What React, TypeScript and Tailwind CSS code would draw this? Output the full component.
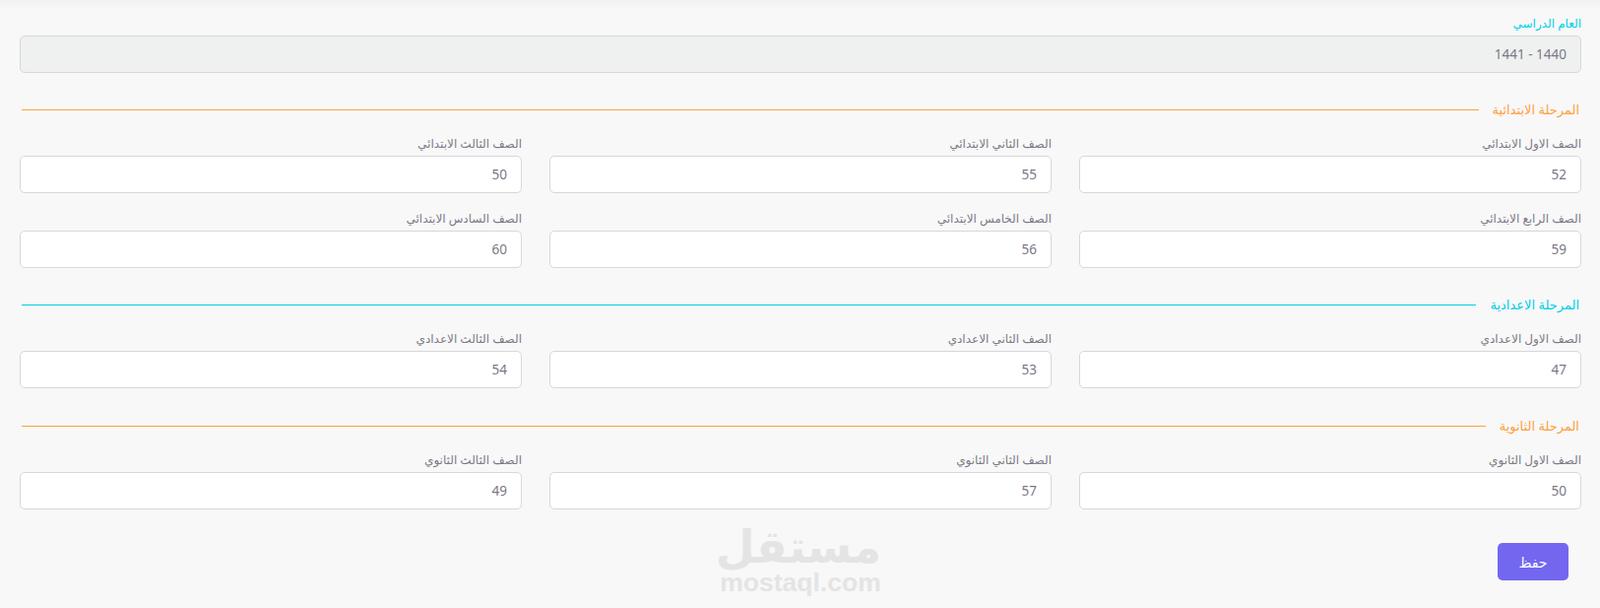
const FONT = "font-['Noto_Sans','DejaVu_Sans',sans-serif]";

type Grade = { label: string; value: number };

const PRIMARY: Grade[] = [
  { label: "الصف الاول الابتدائي", value: 52 },
  { label: "الصف الثاني الابتدائي", value: 55 },
  { label: "الصف الثالث الابتدائي", value: 50 },
  { label: "الصف الرابع الابتدائي", value: 59 },
  { label: "الصف الخامس الابتدائي", value: 56 },
  { label: "الصف السادس الابتدائي", value: 60 },
];

const MIDDLE: Grade[] = [
  { label: "الصف الاول الاعدادي", value: 47 },
  { label: "الصف الثاني الاعدادي", value: 53 },
  { label: "الصف الثالث الاعدادي", value: 54 },
];

const SECONDARY: Grade[] = [
  { label: "الصف الاول الثانوي", value: 50 },
  { label: "الصف الثاني الثانوي", value: 57 },
  { label: "الصف الثالث الثانوي", value: 49 },
];

function Field({ label, value }: Grade) {
  return (
    <label className="block">
      <span className="block h-[22px] text-[12px] leading-[20px] text-[#7b7887]">{label}</span>
      <input
        readOnly
        value={value}
        className="block h-[38px] w-full rounded-[5px] border border-[#d8d6de] bg-white px-[14px] text-[13.5px] text-[#7b7887] outline-none"
      />
    </label>
  );
}

function Section({
  title,
  grades,
  textClass,
  lineClass,
  className,
}: {
  title: string;
  grades: Grade[];
  textClass: string;
  lineClass: string;
  className: string;
}) {
  return (
    <section className={className}>
      <div className="flex items-center gap-[14px] pl-[2px] pr-[2px]">
        <h2 className={`text-[13px] leading-[20px] font-normal ${textClass}`}>{title}</h2>
        <div className={`h-px flex-1 ${lineClass}`} />
      </div>
      <div className="mt-[15px] grid grid-cols-3 gap-x-[28px] gap-y-[16px]">
        {grades.map((g) => (
          <Field key={g.label} {...g} />
        ))}
      </div>
    </section>
  );
}

export default function App() {
  return (
    <div dir="rtl" className={`relative h-[617px] overflow-hidden bg-[#f8f8f8] ${FONT}`}>
      <div className="h-[9px] bg-gradient-to-b from-[#f1f1f1] to-[#f8f8f8]" />

      <div className="pl-[20px] pr-[19px] pt-[5px]">
        <label className="block">
          <span className="block h-[22px] text-[12px] leading-[20px] text-[#00cfe8]">العام الدراسي</span>
          <input
            readOnly
            value="1440 - 1441"
            className="block h-[38px] w-full rounded-[5px] border border-[#d8d6de] bg-[#eff0f0] bg-[radial-gradient(#d4d6d6_0.7px,transparent_0.9px)] bg-[length:10px_6px] px-[14px] text-[13.5px] text-[#7b7887] outline-none"
          />
        </label>

        <Section
          title="المرحلة الابتدائية"
          grades={PRIMARY}
          textClass="text-[#ff9f43]"
          lineClass="bg-[#ff9f43]"
          className="mt-[27px]"
        />
        <Section
          title="المرحلة الاعدادية"
          grades={MIDDLE}
          textClass="text-[#00cfe8]"
          lineClass="bg-[#00cfe8]"
          className="mt-[27px]"
        />
        <Section
          title="المرحلة الثانوية"
          grades={SECONDARY}
          textClass="text-[#ff9f43]"
          lineClass="bg-[#ff9f43]"
          className="mt-[28px]"
        />

        <div className="mr-[13px] mt-[34px]">
          <button
            type="button"
            className="h-[38px] w-[72px] rounded-[5px] bg-[#7367f0] text-[14px] font-medium text-white"
          >
            حفظ
          </button>
        </div>
      </div>

      {/* watermark */}
      <div className="pointer-events-none absolute left-[731px] top-[530px] w-[164px] text-center text-[#e4e4e4]">
        <div className="h-[48px] text-[46px] leading-[46px] font-bold">مستقل</div>
        <div dir="ltr" className="font-['Liberation_Sans',sans-serif] text-[26.5px] leading-[26px] font-bold">
          mostaql.com
        </div>
      </div>
    </div>
  );
}
